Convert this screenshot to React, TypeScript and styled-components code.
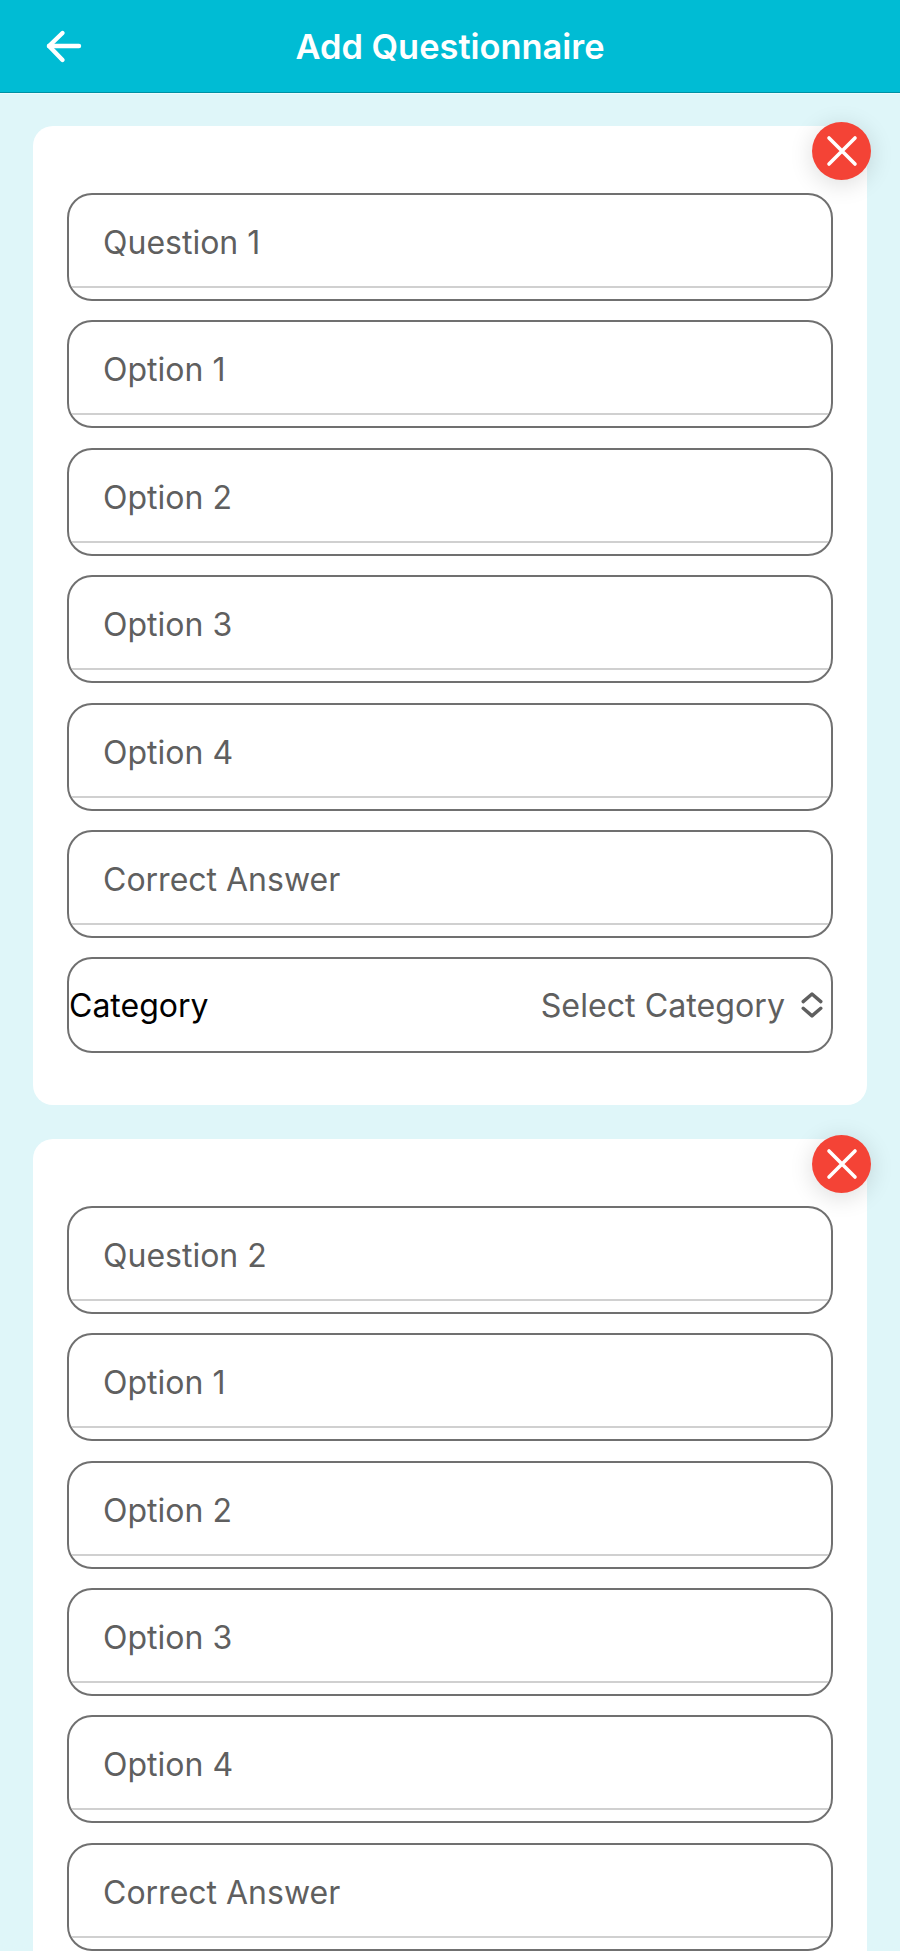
import React from 'react';
import styled, { createGlobalStyle } from 'styled-components';

const GlobalStyle = createGlobalStyle`
  html, body {
    margin: 0;
    padding: 0;
    background: #dff6f9;
  }
  body {
    width: 900px;
    height: 1951px;
    overflow: hidden;
    font-family: Inter, "Liberation Sans", sans-serif;
  }
`;

const Page = styled.div`
  display: flex;
  flex-direction: column;
  height: 1951px;
  overflow: hidden;
  background: #dff6f9;
`;

const Header = styled.header`
  flex: none;
  position: relative;
  display: flex;
  align-items: center;
  justify-content: center;
  height: 92px;
  background: #00bcd4;
  border-bottom: 1px solid #0090a3;
  box-shadow: 0 1px 0 rgba(255, 255, 255, 0.5);
`;

const BackButton = styled.button`
  position: absolute;
  left: 44px;
  top: 27px;
  display: flex;
  width: 38px;
  height: 38px;
  padding: 0;
  border: none;
  background: none;
`;

const Title = styled.h1`
  margin: 0;
  padding-top: 2px;
  color: #ffffff;
  font-size: 34.4px;
  font-weight: 600;
  line-height: 90px;
`;

const Content = styled.main`
  display: flex;
  flex-direction: column;
  gap: 34px;
  padding: 33px 33px 0 33px;
`;

const Card = styled.section`
  position: relative;
  display: flex;
  flex: none;
  flex-direction: column;
  gap: 19.4px;
  padding: 67px 34px 51.5px 34px;
  background: #ffffff;
  border-radius: 20px;
`;

const CloseButton = styled.button`
  position: absolute;
  top: -4px;
  right: -4px;
  display: flex;
  align-items: center;
  justify-content: center;
  width: 59px;
  height: 58px;
  padding: 0;
  border: none;
  border-radius: 50%;
  background: #f44336;
  box-shadow: 0 4px 24px rgba(0, 0, 0, 0.14);
`;

const Field = styled.div`
  box-sizing: border-box;
  height: 108px;
  overflow: hidden;
  background: #ffffff;
  border: 2px solid #707070;
  border-radius: 25px;
`;

const TextInput = styled.input`
  display: block;
  box-sizing: border-box;
  width: 100%;
  height: 93px;
  padding: 4px 34px 0 34px;
  border: none;
  border-bottom: 2px solid #d0d0d0;
  outline: none;
  background: transparent;
  color: #222222;
  font-family: Inter, "Liberation Sans", sans-serif;
  font-size: 32px;

  &::placeholder {
    color: #5f5f5f;
    opacity: 1;
  }
`;

const SelectRow = styled.div`
  box-sizing: border-box;
  display: flex;
  align-items: center;
  justify-content: space-between;
  height: 96px;
  padding: 1px 7px 0 0;
  background: #ffffff;
  border: 2px solid #707070;
  border-radius: 25px;
`;

const SelectLabel = styled.span`
  color: #000000;
  font-size: 32px;
`;

const SelectValue = styled.span`
  display: flex;
  align-items: center;
  gap: 15px;
  color: #5f5f5f;
  font-size: 32.2px;
`;

const BackIcon = () => (
  <svg width="38" height="38" viewBox="0 0 38 38" fill="none" stroke="#ffffff" strokeWidth="4.4" strokeLinecap="round" strokeLinejoin="round">
    <path d="M18.5 6 5 19l13.5 14" />
    <path d="M5 19h30" />
  </svg>
);

const CloseIcon = () => (
  <svg width="34" height="34" viewBox="0 0 34 34" fill="none" stroke="#ffffff" strokeWidth="3.6" strokeLinecap="round">
    <path d="M4 4l26 26M30 4 4 30" />
  </svg>
);

const SortIcon = () => (
  <svg width="24" height="28" viewBox="0 0 24 28" fill="none" stroke="#5f5f5f" strokeWidth="3.4" strokeLinecap="round" strokeLinejoin="round">
    <path d="M3.2 9.6 12 2l8.8 7.6" />
    <path d="M3.2 16.3 12 23.9l8.8-7.6" />
  </svg>
);

const QuestionCard = ({ number, showSelect = true }: { number: number; showSelect?: boolean }) => (
  <Card>
    <CloseButton aria-label="Remove question">
      <CloseIcon />
    </CloseButton>
    {[`Question ${number}`, 'Option 1', 'Option 2', 'Option 3', 'Option 4', 'Correct Answer'].map((label) => (
      <Field key={label}>
        <TextInput placeholder={label} />
      </Field>
    ))}
    {showSelect && (
      <SelectRow>
        <SelectLabel>Category</SelectLabel>
        <SelectValue>
          Select Category
          <SortIcon />
        </SelectValue>
      </SelectRow>
    )}
  </Card>
);

export default function App() {
  return (
    <>
      <GlobalStyle />
      <Page>
        <Header>
          <BackButton aria-label="Back">
            <BackIcon />
          </BackButton>
          <Title>Add Questionnaire</Title>
        </Header>
        <Content>
          <QuestionCard number={1} />
          {/* the second card runs past the bottom of the page before its select row */}
          <QuestionCard number={2} showSelect={false} />
        </Content>
      </Page>
    </>
  );
}
